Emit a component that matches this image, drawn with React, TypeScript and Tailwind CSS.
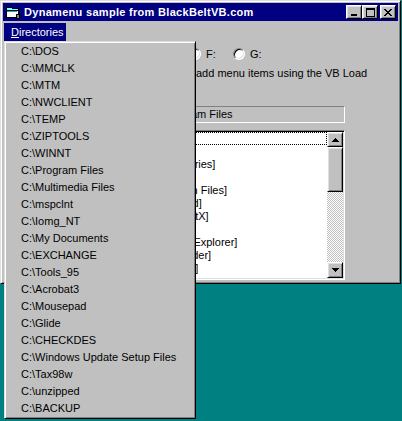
import React from "react";

const drives = ["F:", "G:"];

const menuItems = [
  "C:\\DOS",
  "C:\\MMCLK",
  "C:\\MTM",
  "C:\\NWCLIENT",
  "C:\\TEMP",
  "C:\\ZIPTOOLS",
  "C:\\WINNT",
  "C:\\Program Files",
  "C:\\Multimedia Files",
  "C:\\mspclnt",
  "C:\\Iomg_NT",
  "C:\\My Documents",
  "C:\\EXCHANGE",
  "C:\\Tools_95",
  "C:\\Acrobat3",
  "C:\\Mousepad",
  "C:\\Glide",
  "C:\\CHECKDES",
  "C:\\Windows Update Setup Files",
  "C:\\Tax98w",
  "C:\\unzipped",
  "C:\\BACKUP",
];

const listItems = [
  "[ATI]",
  "[Adobe]",
  "[Accessories]",
  "[Chat]",
  "[Common Files]",
  "[WordPad]",
  "[MSDirectX]",
  "[Plus!]",
  "[Internet Explorer]",
  "[CD Reader]",
  "[Uninstall]",
];

const raised =
  "border border-t-white border-l-white border-r-black border-b-black shadow-[inset_1px_1px_#dfdfdf,inset_-1px_-1px_#808080] bg-[#c0c0c0]";

function TitleIcon() {
  return (
    <svg width="16" height="16" viewBox="0 0 16 16" shapeRendering="crispEdges">
      <path d="M1 3h5l1 1h6v2H1z" fill="#80ffff" stroke="#000" strokeWidth="1" />
      <path d="M1 6h12v7H1z" fill="#ffffff" stroke="#000" strokeWidth="1" />
      <path d="M2 7h10v1H2z" fill="#00c0c0" />
      <path d="M11 10h4v5h-4z" fill="#000" />
      <path d="M12 11h2v3h-2z" fill="#808080" />
    </svg>
  );
}

function CaptionButton({ kind }: { kind: "min" | "max" | "close" }) {
  return (
    <div className={`${raised} w-[16px] h-[14px] flex items-center justify-center`}>
      {kind === "min" && (
        <svg width="8" height="7" viewBox="0 0 8 7" shapeRendering="crispEdges">
          <rect x="1" y="5" width="6" height="2" fill="#000" />
        </svg>
      )}
      {kind === "max" && (
        <svg width="9" height="9" viewBox="0 0 9 9" shapeRendering="crispEdges">
          <rect x="0" y="0" width="9" height="2" fill="#000" />
          <rect x="0" y="0" width="1" height="9" fill="#000" />
          <rect x="8" y="0" width="1" height="9" fill="#000" />
          <rect x="0" y="8" width="9" height="1" fill="#000" />
        </svg>
      )}
      {kind === "close" && (
        <svg width="8" height="7" viewBox="0 0 8 7" shapeRendering="crispEdges">
          <path d="M0 0h2v1h1v1h2V1h1V0h2v1H7v1H6v1H5v1h1v1h1v1h1v1H6V6H5V5H3v1H2v1H0V6h1V5h1V4h1V3H2V2H1V1H0z" fill="#000" />
        </svg>
      )}
    </div>
  );
}

function Radio({ label }: { label: string }) {
  return (
    <div className="w-[44px] flex items-center gap-[5px]">
      <span className="w-[12px] h-[12px] rounded-full bg-white border border-t-[#808080] border-l-[#808080] border-r-white border-b-white shadow-[inset_1px_1px_#000,inset_-1px_-1px_#dfdfdf]" />
      <span>{label}</span>
    </div>
  );
}

function Arrow({ up }: { up: boolean }) {
  return (
    <svg width="7" height="4" viewBox="0 0 7 4" shapeRendering="crispEdges">
      {up ? (
        <path d="M3 0h1v1h1v1h1v1h1v1H0V3h1V2h1V1h1z" fill="#000" />
      ) : (
        <path d="M0 0h7v1H6v1H5v1H4v1H3V3H2V2H1V1H0z" fill="#000" />
      )}
    </svg>
  );
}

export default function App() {
  return (
    <div
      className="relative w-[402px] h-[421px] bg-[#008080] overflow-hidden text-[11px] text-black"
      style={{ fontFamily: '"Liberation Sans", Arial, sans-serif' }}
    >
      {/* Main form window */}
      <div className="w-[401px] h-[284px] bg-[#c0c0c0] border border-t-[#dfdfdf] border-l-[#dfdfdf] border-r-black border-b-black shadow-[inset_1px_1px_#fff,inset_-1px_-1px_#808080] p-[2px] flex flex-col">
        {/* Title bar */}
        <div className="h-[18px] bg-[#000080] flex items-center pl-[2px] pr-[2px]">
          <TitleIcon />
          <span className="ml-[3px] text-white font-bold tracking-[0.3px] leading-none">
            Dynamenu sample from BlackBeltVB.com
          </span>
          <div className="ml-auto flex items-center">
            <CaptionButton kind="min" />
            <CaptionButton kind="max" />
            <div className="w-[2px]" />
            <CaptionButton kind="close" />
          </div>
        </div>

        {/* Menu bar */}
        <div className="h-[20px] flex items-end pl-[1px]">
          <div className="w-[62px] h-[18px] bg-[#000080] text-white flex items-center pl-[7px]">
            <span>
              <span className="underline">D</span>irectories
            </span>
          </div>
        </div>

        {/* Client area */}
        <div className="flex flex-col">
          <div className="mt-[7px] h-[12px] pl-[186px] flex items-center">
            {drives.map((d) => (
              <Radio key={d} label={d} />
            ))}
          </div>

          <div className="mt-[7px] h-[12px] ml-[193px] leading-[12px] whitespace-nowrap">
            add menu items using the VB Load
          </div>

          <div className="mt-[27px] ml-[142px] w-[200px] h-[17px] border border-t-[#808080] border-l-[#808080] border-r-white border-b-white flex items-center pl-[4px]">
            C:\Program Files
          </div>

          <div className="mt-[7px] ml-[142px] w-[200px] h-[150px] bg-white border border-t-[#808080] border-l-[#808080] border-r-white border-b-white shadow-[inset_1px_1px_#000,inset_-1px_-1px_#dfdfdf] p-[1px] flex">
            <div className="flex-1 flex flex-col">
              {listItems.map((item, i) => (
                <div
                  key={item}
                  className={
                    i === 0
                      ? "h-[13px] border border-dotted border-black flex items-center pl-[2px] whitespace-nowrap"
                      : "h-[13px] flex items-center pl-[3px] whitespace-nowrap"
                  }
                >
                  {item}
                </div>
              ))}
            </div>
            <div className="w-[16px] flex flex-col">
              <div className={`${raised} h-[15px] flex items-center justify-center`}>
                <Arrow up />
              </div>
              <div className={`${raised} h-[45px]`} />
              <div className="flex-1 bg-[repeating-conic-gradient(#c0c0c0_0_25%,#ffffff_0_50%)] bg-[length:2px_2px]" />
              <div className={`${raised} h-[16px] flex items-center justify-center`}>
                <Arrow up={false} />
              </div>
            </div>
          </div>
        </div>
      </div>

      {/* Dropped-down Directories menu */}
      <div className="absolute left-[4px] top-[41px] w-[192px] bg-[#c0c0c0] border border-t-[#dfdfdf] border-l-[#dfdfdf] border-r-black border-b-black shadow-[inset_1px_1px_#fff,inset_-1px_-1px_#808080] p-[1px] flex flex-col">
        {menuItems.map((item) => (
          <div key={item} className="h-[17px] flex items-center pl-[15px] whitespace-nowrap">
            {item}
          </div>
        ))}
      </div>
    </div>
  );
}
